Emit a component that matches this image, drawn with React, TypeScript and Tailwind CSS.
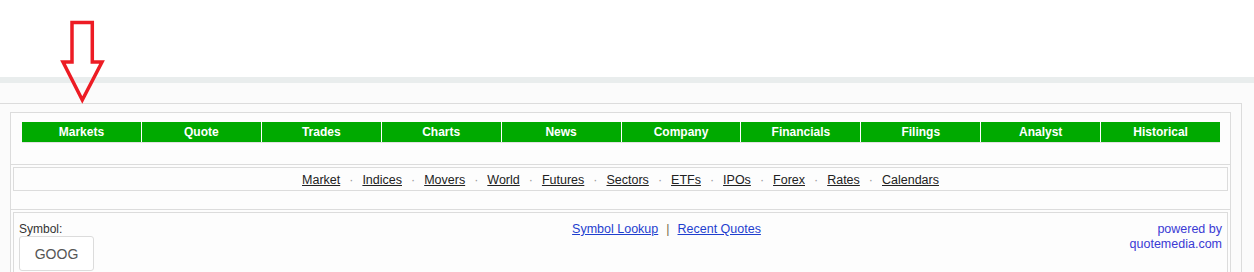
import React from "react";

const tabs = ["Markets", "Quote", "Trades", "Charts", "News", "Company", "Financials", "Filings", "Analyst", "Historical"];
const subs = ["Market", "Indices", "Movers", "World", "Futures", "Sectors", "ETFs", "IPOs", "Forex", "Rates", "Calendars"];

export default function App() {
  return (
    <div
      className="relative w-[1254px] h-[272px] overflow-hidden bg-[#fbfbfb]"
      style={{ fontFamily: '"Liberation Sans", Arial, sans-serif' }}
    >
      <div className="h-[77px] bg-white" />
      <div className="h-[6px] bg-[#e9eded]" />
      <div className="pt-[20px]">
        <div className="mr-[12px] border-t border-r border-[#dcdcdc] pl-[10px] pr-[10px] pt-[8px] pb-[20px]">
          <div className="border border-[#dcdcdc] bg-[#fdfdfd]">
            {/* Row 1: main tabs */}
            <div className="pl-[11px] pr-[10px] pt-[9px] pb-[21px] border-b border-[#dcdcdc]">
              <div className="flex h-[21px] bg-[#00aa00] border-b border-[#e2e2e2]">
                {tabs.map((t, i) => (
                  <div
                    key={t}
                    className={
                      "flex-1 flex items-center justify-center text-[12px] font-bold text-white leading-none " +
                      (i > 0 ? "border-l border-white" : "")
                    }
                  >
                    {t}
                  </div>
                ))}
              </div>
            </div>
            {/* Row 2: sub nav */}
            <div className="px-[2px] pt-[2px] pb-[18px] border-b border-[#dcdcdc]">
              <div className="h-[24px] pt-[2px] border border-[#dcdcdc] bg-[#fdfdfd] flex items-center justify-center text-[12.5px] text-[#222]">
                {subs.map((s, i) => (
                  <React.Fragment key={s}>
                    {i > 0 && <span className="px-[9px] text-[#999]">·</span>}
                    <a className="underline">{s}</a>
                  </React.Fragment>
                ))}
              </div>
            </div>
            {/* Row 3: symbol */}
            <div className="px-[2px] pt-[2px]">
              <div className="border border-[#dcdcdc] bg-[#fdfdfd] flex pl-[5px] pr-[5px] pt-[9px] pb-[20px] text-[12.5px] leading-[14px]">
                <div className="w-[200px]">
                  <div className="text-[#333] text-[12px]">Symbol:</div>
                  <div className="mt-[0px] w-[75px] h-[35px] border border-[#dcdcdc] rounded-[3px] bg-white flex items-center justify-center text-[14px] text-[#555]">
                    GOOG
                  </div>
                </div>
                <div className="flex-1 text-center">
                  <a className="underline text-[#1f3fcf]">Symbol Lookup</a>
                  <span className="px-[8px] text-[#7a6a4a]">|</span>
                  <a className="underline text-[#1f3fcf]">Recent Quotes</a>
                </div>
                <div className="w-[108px] text-right text-[#3a3ad4] leading-[15px]">
                  powered by
                  <br />
                  quotemedia.com
                </div>
              </div>
            </div>
          </div>
        </div>
      </div>
      <svg className="absolute left-0 top-0" width="120" height="110" viewBox="0 0 120 110">
        <polygon
          points="72,22.5 92.3,22.5 92.3,62 102,62 82.3,100 63,62 72,62"
          fill="none"
          stroke="#ed1c24"
          strokeWidth="3.5"
          strokeLinejoin="miter"
        />
      </svg>
    </div>
  );
}
